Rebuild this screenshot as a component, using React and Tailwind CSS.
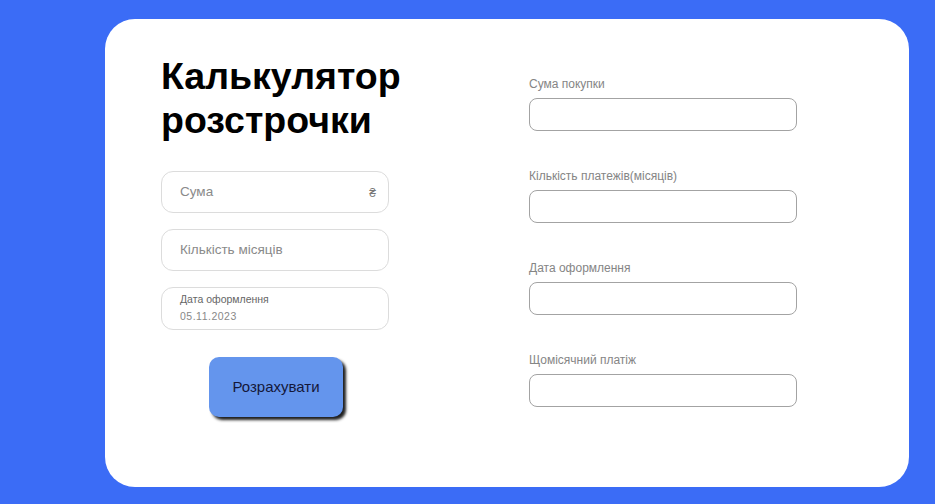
import React from 'react';

const LeftInput = ({ placeholder, suffix }) => (
  <div className="relative h-[42px] w-[228px] rounded-[12px] border border-[#dcdcdc] bg-white flex items-center px-[18px]">
    <span className="text-[13.5px] text-[#8a8a8a]">{placeholder}</span>
    {suffix && <span className="absolute right-[12px] top-[12px] text-[12px] text-[#777]">{suffix}</span>}
  </div>
);

const ResultField = ({ label }) => (
  <div className="flex flex-col h-[92px]">
    <label className="h-[16px] leading-[16px] text-[12px] text-[#858585]">{label}</label>
    <div className="mt-[6px] h-[33px] w-[268px] rounded-[8px] border border-[#a3a3a3] bg-white" />
  </div>
);

export default function App() {
  return (
    <div className="min-h-[504px] bg-[#3b6cf6] pt-[19px] pb-[17px] pl-[105px]" style={{ fontFamily: '"Liberation Sans", Arial, sans-serif' }}>
      <div className="w-[804px] h-[468px] rounded-[30px] bg-white flex pl-[56px] pt-[35px]">
        <div className="w-[229px] flex flex-col">
          <h1 className="text-[37.5px] leading-[44px] font-bold text-black whitespace-nowrap">Калькулятор<br />розстрочки</h1>
          <div className="mt-[29px] flex flex-col gap-[16px]">
            <LeftInput placeholder="Сума" suffix="₴" />
            <LeftInput placeholder="Кількість місяців" />
            <div className="h-[43px] w-[228px] rounded-[12px] border border-[#dcdcdc] bg-white px-[18px] pt-[4px]">
              <div className="text-[10.5px] leading-[14px] text-[#666]">Дата оформлення</div>
              <div className="mt-[3px] text-[10.5px] leading-[14px] text-[#888] tracking-[0.5px]">05.11.2023</div>
            </div>
          </div>
          <button className="mt-[27px] ml-[48px] h-[60px] w-[134px] rounded-[10px] bg-[#6495ed] text-[15px] text-[#14183a] shadow-[3px_3px_3px_#1f1f1f]">
            Розрахувати
          </button>
        </div>
        <div className="ml-[139px] pt-[22px] flex flex-col">
          <ResultField label="Сума покупки" />
          <ResultField label="Кількість платежів(місяців)" />
          <ResultField label="Дата оформлення" />
          <ResultField label="Щомісячний платіж" />
        </div>
      </div>
    </div>
  );
}
